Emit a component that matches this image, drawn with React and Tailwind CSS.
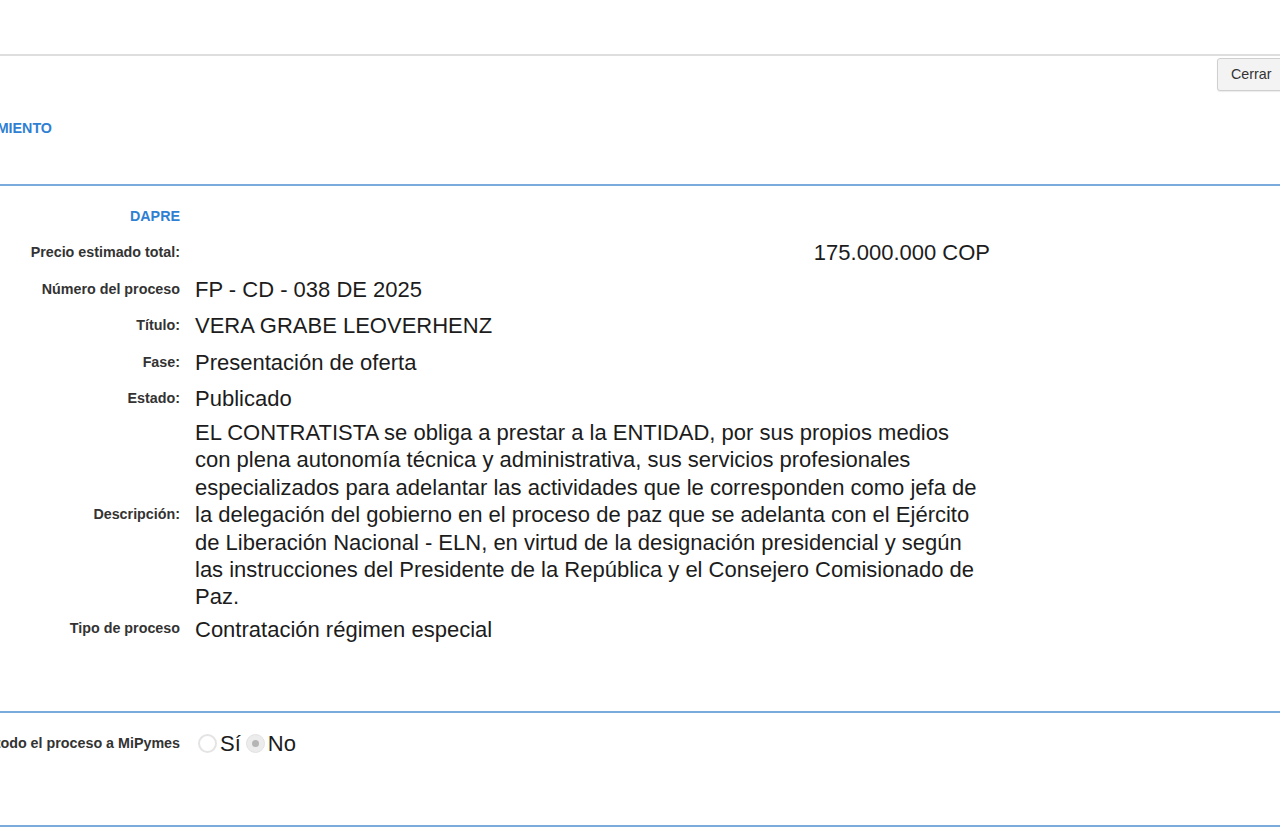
import React from "react";

const LABEL =
  "w-[180px] shrink-0 flex justify-end items-center whitespace-nowrap text-[14.3px] font-bold text-[#333]";
const VALUE = "w-[795px] text-[22px] leading-[27px] text-[#1c1c1c]";

function Row({ label, children, labelClass = "", valueClass = "", rowClass = "py-[4.75px]" }) {
  return (
    <div className={`flex gap-[15px] ${rowClass}`}>
      <div className={`${LABEL} ${labelClass}`}>{label}</div>
      <div className={`${VALUE} ${valueClass}`}>{children}</div>
    </div>
  );
}

function Radio({ checked }) {
  return checked ? (
    <span className="w-[19px] h-[19px] rounded-full bg-[#ececec] border border-[#e2e2e2] flex items-center justify-center">
      <span className="w-[7px] h-[7px] rounded-full bg-[#b5b5b5]" />
    </span>
  ) : (
    <span className="w-[19px] h-[19px] rounded-full bg-white border-2 border-[#e4e4e4]" />
  );
}

export default function App() {
  return (
    <div
      className="w-[1280px] h-[831px] overflow-hidden bg-white"
      style={{ fontFamily: '"Liberation Sans", Arial, sans-serif' }}
    >
      <div className="h-[54px]" />
      <div className="h-[2px] bg-[#dedede]" />

      <div className="h-[128px] flex flex-col">
        <div className="flex justify-end pt-[2px]">
          <button className="h-[33px] w-[67px] mr-[-4px] pl-[13px] text-left rounded-[3px] border border-[#cfcfcf] bg-[#f3f3f3] text-[14.3px] text-[#333] shadow-[0_1px_1px_rgba(0,0,0,0.08)]">
            Cerrar
          </button>
        </div>
        <div className="mt-[29px] w-[52px] overflow-hidden flex justify-end whitespace-nowrap text-[14.3px] leading-[17px] font-bold text-[#2f7fd3]">
          INFORMACIÓN DEL PROCEDIMIENTO
        </div>
      </div>

      <div className="h-[2px] bg-[#7aabdc]" />

      <div className="h-[525px] pt-[12px]">
        <Row label="DAPRE" labelClass="!text-[#2f7fd3]">
          {"\u00a0"}
        </Row>
        <Row label="Precio estimado total:" valueClass="text-right">
          175.000.000 COP
        </Row>
        <Row label="Número del proceso">FP - CD - 038 DE 2025</Row>
        <Row label="Título:">VERA GRABE LEOVERHENZ</Row>
        <Row label="Fase:">Presentación de oferta</Row>
        <Row label="Estado:">Publicado</Row>
        <Row label="Descripción:" rowClass="pt-[2px]" valueClass="!leading-[27.4px]">
          EL CONTRATISTA se obliga a prestar a la ENTIDAD, por sus propios medios con plena
          autonomía técnica y administrativa, sus servicios profesionales especializados para
          adelantar las actividades que le corresponden como jefa de la delegación del gobierno en
          el proceso de paz que se adelanta con el Ejército de Liberación Nacional - ELN, en virtud
          de la designación presidencial y según las instrucciones del Presidente de la República y
          el Consejero Comisionado de Paz.
        </Row>
        <Row label="Tipo de proceso">Contratación régimen especial</Row>
      </div>

      <div className="h-[2px] bg-[#7aabdc]" />

      <div className="h-[112px] pt-[12px]">
        <div className="flex gap-[15px] py-[4.75px]">
          <div className={`${LABEL} overflow-hidden`}>Limitar todo el proceso a MiPymes</div>
          <div className="flex items-center text-[22px] leading-[27px] text-[#1c1c1c] pl-[3px]">
            <Radio />
            <span className="ml-[3px]">Sí</span>
            <span className="ml-[5px]">
              <Radio checked />
            </span>
            <span className="ml-[3px]">No</span>
          </div>
        </div>
      </div>

      <div className="h-[2px] bg-[#7aabdc]" />
    </div>
  );
}
